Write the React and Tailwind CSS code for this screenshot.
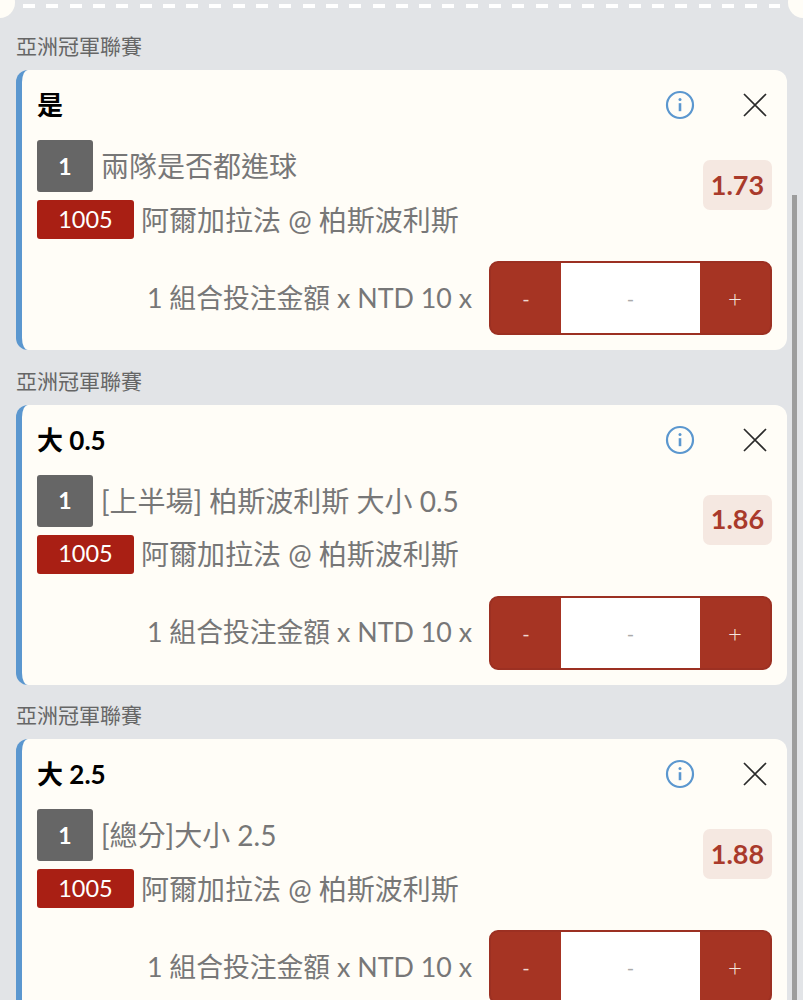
const bets = [
    { title: "是", market: "兩隊是否都進球", odds: "1.73" },
    { title: "大 0.5", market: "[上半場] 柏斯波利斯 大小 0.5", odds: "1.86" },
    { title: "大 2.5", market: "[總分]大小 2.5", odds: "1.88" },
];

function InfoIcon() {
    return (
        <svg width="30" height="30" viewBox="0 0 30 30" fill="none">
            <circle cx="15" cy="15" r="13" stroke="#5b97cf" strokeWidth="2.2" />
            <circle cx="15" cy="9.5" r="1.5" fill="#5b97cf" />
            <path d="M15 13.2v8" stroke="#5b97cf" strokeWidth="2.6" />
        </svg>
    );
}

function CloseIcon() {
    return (
        <svg width="24" height="24" viewBox="0 0 24 24" fill="none">
            <path d="M1 1l22 22M23 1L1 23" stroke="#2a2a2a" strokeWidth="1.7" />
        </svg>
    );
}

function BetCard({ bet }) {
    return (
        <div className="h-[280px] rounded-[12px] border-l-[6px] border-[#5b97cf] bg-[#fffdf7] pl-[15px] pr-[15px] pt-[19px]">
            <div className="flex h-[32px] items-center justify-between">
                <div className="text-[26px] font-bold leading-[32px] text-black">{bet.title}</div>
                <div className="flex items-center gap-[48px] pr-[5px]">
                    <InfoIcon />
                    <CloseIcon />
                </div>
            </div>
            <div className="mt-[19px] flex items-center justify-between">
                <div>
                    <div className="flex h-[52px] items-center gap-[8px]">
                        <div className="flex h-[52px] w-[56px] items-center justify-center rounded-[3px] bg-[#666666] text-[23px] font-bold text-white">1</div>
                        <div className="text-[28px] text-[#777777]">{bet.market}</div>
                    </div>
                    <div className="mt-[8px] flex h-[39px] items-center gap-[7px]">
                        <div className="flex h-[39px] w-[97px] items-center justify-center rounded-[3px] bg-[#a91f14] text-[23.5px] text-white">1005</div>
                        <div className="text-[28px] text-[#777777]">阿爾加拉法 @ 柏斯波利斯</div>
                    </div>
                </div>
                <div className="mb-[9px] flex h-[50px] w-[69px] items-center justify-center rounded-[7px] bg-[#f5e8e1] text-[27px] font-bold text-[#a93a2b]">{bet.odds}</div>
            </div>
            <div className="mt-[22px] flex items-center justify-end gap-[17px]">
                <div className="text-[26.8px] text-[#777777]">1 組合投注金額 x NTD 10 x</div>
                <div className="flex h-[74px] w-[283px] overflow-hidden rounded-[9px] border-2 border-[#9c3022] bg-[#a63423]">
                    <div className="flex w-[70px] items-center justify-center text-[20px] text-[#f0d8d0]">-</div>
                    <div className="flex flex-1 items-center justify-center bg-white text-[20px] text-[#aaaaaa]">-</div>
                    <div className="flex w-[70px] items-center justify-center text-[24px] font-light text-[#f5e5df]">+</div>
                </div>
            </div>
        </div>
    );
}

export default function App() {
    return (
        <div className="relative h-[1000px] overflow-hidden bg-[#e2e4e7] font-['Lato','Noto_Sans_CJK_TC',sans-serif]">
            <div className="absolute -left-[16px] -top-[13px] h-[31px] w-[31px] rounded-full bg-[#fffdf7]"></div>
            <div className="absolute -right-[16px] -top-[13px] h-[31px] w-[31px] rounded-full bg-[#fffdf7]"></div>
            <div className="mx-[23px] h-[15.5px] pt-[4px]">
                <div className="h-[4px] bg-[repeating-linear-gradient(90deg,#ffffff_0,#ffffff_12px,transparent_12px,transparent_23.3px)]"></div>
            </div>
            <div className="ml-[16px] mr-[16px]">
                {bets.map((bet, index) => (
                    <div key={index}>
                        <div className="flex h-[54.5px] items-center pt-[6px] text-[21px] text-[#666666]">亞洲冠軍聯賽</div>
                        <BetCard bet={bet} />
                    </div>
                ))}
            </div>
            <div className="absolute right-[6px] top-[195px] h-[805px] w-[5px] bg-[#9d9d9d]"></div>
        </div>
    );
}
